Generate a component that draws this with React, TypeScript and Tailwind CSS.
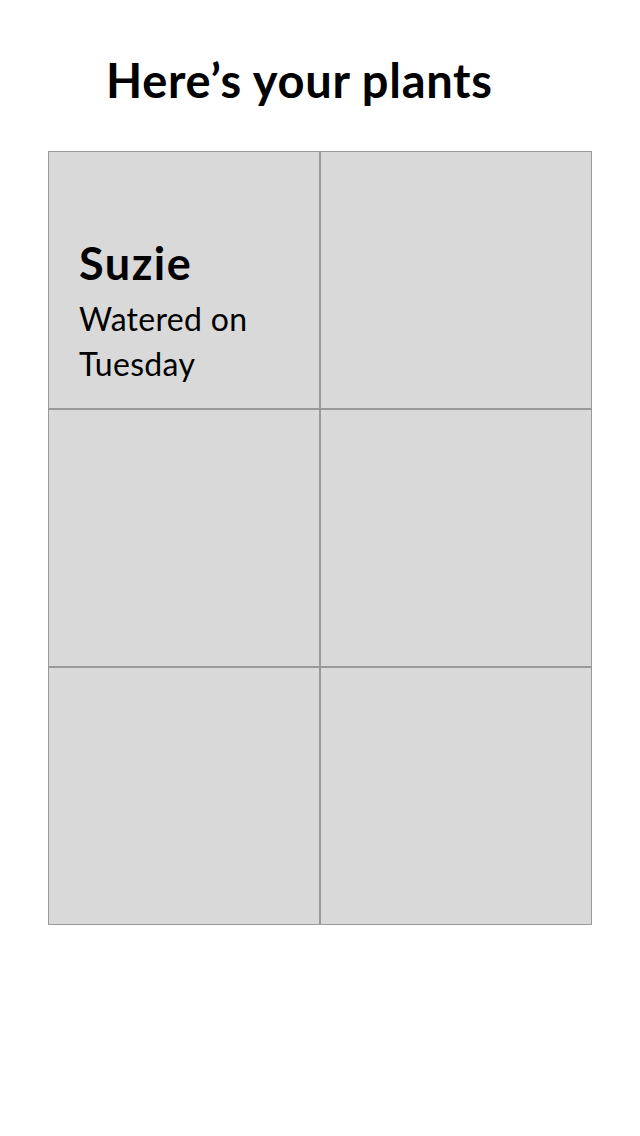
const plants = [
  { name: "Suzie", note: "Watered on Tuesday" },
  null,
  null,
  null,
  null,
  null,
];

export default function App() {
  return (
    <div className="min-h-[1136px] bg-white font-['Lato',sans-serif] text-black">
      <h1 className="pl-[106px] pt-[52px] text-[47px] font-bold leading-[56px] tracking-[0.7px]">
        Here’s your plants
      </h1>
      <div className="ml-[48px] mt-[43px] grid w-[544px] grid-cols-2">
        {plants.map((p, i) => (
          <div
            key={i}
            className="flex h-[258px] flex-col justify-end border border-[#999999] bg-[#d9d9d9] pb-[22px] pl-[30px]"
          >
            {p && (
              <>
                <div className="text-[45px] font-bold leading-[48px] tracking-[1.5px]">{p.name}</div>
                <div className="mt-[9px] w-[200px] text-[32px] leading-[45px] tracking-[0.3px]">{p.note}</div>
              </>
            )}
          </div>
        ))}
      </div>
    </div>
  );
}
